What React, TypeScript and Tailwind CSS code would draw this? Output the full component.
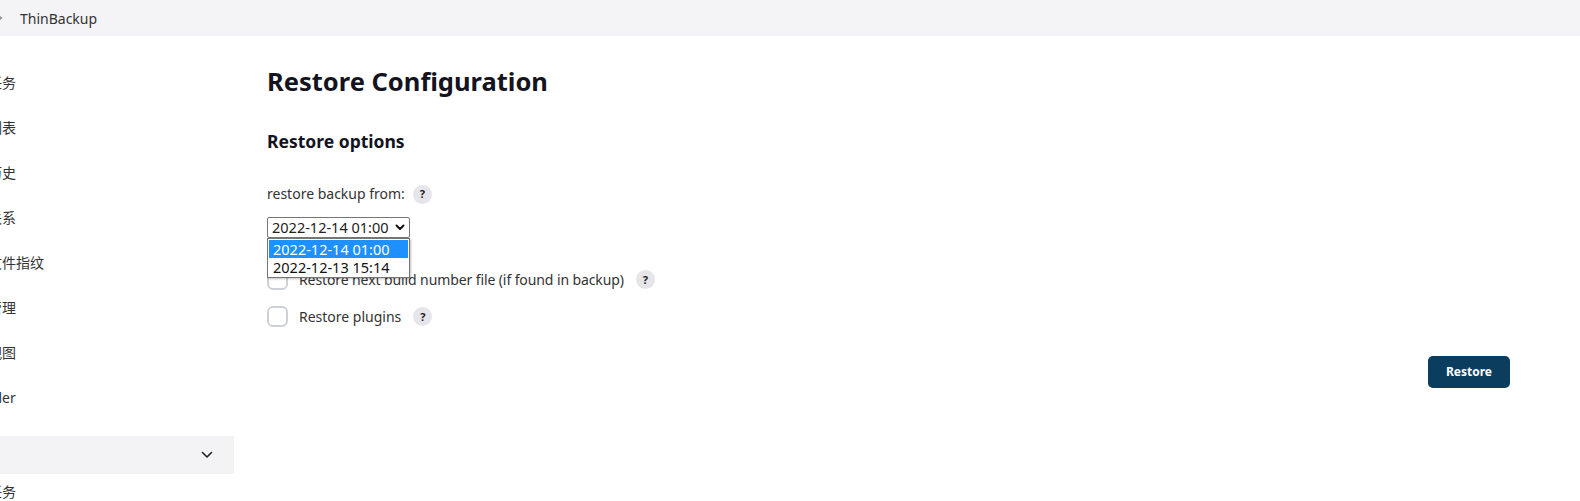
import React from "react";

const font = { fontFamily: '"Noto Sans", "Noto Sans CJK SC", sans-serif' };

function Help() {
  return (
    <span className="inline-flex h-[19px] w-[19px] items-center justify-center rounded-full bg-[#e6e6ea] text-[11px] font-bold text-[#222]">
      ?
    </span>
  );
}

const items = ["新建任务", "用户列表", "构建历史", "项目关系", "检查文件指纹", "系统管理", "我的视图", "Handler"];

export default function App() {
  return (
    <div className="flex h-[501px] w-[1580px] flex-col overflow-hidden bg-white text-[#333]" style={font}>
      {/* breadcrumb bar */}
      <div className="flex h-[36px] shrink-0 items-center overflow-hidden bg-[#f4f4f6] text-[14px] text-[#333]">
        <svg className="-ml-[3px] mr-[17px] shrink-0" width="6" height="8" viewBox="0 0 6 8" fill="none">
          <path d="M1.5 1.5 L4.5 4 L1.5 6.5" stroke="#888" strokeWidth="1.3" strokeLinecap="round" strokeLinejoin="round" />
        </svg>
        <span>ThinBackup</span>
      </div>
      <div className="flex flex-1">
        {/* sidebar */}
        <div className="flex w-[234px] shrink-0 flex-col overflow-hidden pt-[24px] text-[14px] text-[#333]">
          {items.map((t, i) => (
            <div key={i} className="flex h-[45px] shrink-0 items-center overflow-hidden whitespace-nowrap">
              <span className="shrink-0" style={{ marginLeft: i === 7 ? -37 : -40 }}>
                {t}
              </span>
            </div>
          ))}
          <div className="mt-[16px] flex h-[38px] shrink-0 items-center justify-end bg-[#f3f3f6] pr-[21px]">
            <svg width="12" height="8" viewBox="0 0 12 8" fill="none">
              <path d="M1.5 1.5 L6 6 L10.5 1.5" stroke="#222" strokeWidth="1.6" strokeLinecap="round" strokeLinejoin="round" />
            </svg>
          </div>
          <div className="flex h-[34px] shrink-0 items-center overflow-hidden whitespace-nowrap">
            <span className="shrink-0" style={{ marginLeft: -40 }}>新建任务</span>
          </div>
        </div>
        {/* main */}
        <div className="flex flex-1 flex-col pl-[33px] pr-[70px]">
          <h1 className="mt-[27px] text-[25.5px] font-bold leading-[36px] text-[#14141f]">Restore Configuration</h1>
          <h2 className="mt-[29px] text-[17.5px] font-bold leading-[26px] text-[#14141f]">Restore options</h2>
          <div className="mt-[30px] flex items-center gap-[8px] text-[14px] leading-[20px]">
            <span>restore backup from:</span>
            <Help />
          </div>
          <div className="relative mt-[13px] h-[21px] w-[143px]">
            <div className="flex h-[21px] w-[143px] items-center justify-between rounded-[2px] border border-[#767676] bg-white pl-[4px] pr-[4px] text-[14.5px] leading-[19px] text-[#222]">
              <span>2022-12-14 01:00</span>
              <svg width="10" height="7" viewBox="0 0 10 7" fill="none">
                <path d="M1.5 1.5 L5 5 L8.5 1.5" stroke="#111" strokeWidth="2" strokeLinecap="round" strokeLinejoin="round" />
              </svg>
            </div>
            <div className="absolute left-0 top-[21px] z-10 flex w-[143px] flex-col border border-[#767676] bg-white p-[1px] text-[14.5px] leading-[18px] shadow-[1px_1px_2px_rgba(0,0,0,0.25)]">
              <div className="bg-[#1e90ff] pl-[4px] text-white">2022-12-14 01:00</div>
              <div className="pl-[4px] text-[#111]">2022-12-13 15:14</div>
            </div>
          </div>
          <div className="mt-[31px] flex items-center gap-[12px] text-[14px] leading-[20px]">
            <span className="h-[21px] w-[21px] rounded-[6px] border-2 border-[#cdd1d7] bg-white" />
            <span className="-ml-[1px] tracking-[-0.1px]">Restore next build number file (if found in backup)</span>
            <Help />
          </div>
          <div className="mt-[16px] flex items-center gap-[12px] text-[14px] leading-[20px]">
            <span className="h-[21px] w-[21px] rounded-[6px] border-2 border-[#cdd1d7] bg-white" />
            <span className="-ml-[1px]">Restore plugins</span>
            <Help />
          </div>
          <div className="mt-[29px] flex justify-end">
            <button className="h-[32px] w-[82px] rounded-[5px] bg-[#0b3d5e] text-[12px] font-bold text-white">Restore</button>
          </div>
        </div>
      </div>
    </div>
  );
}
